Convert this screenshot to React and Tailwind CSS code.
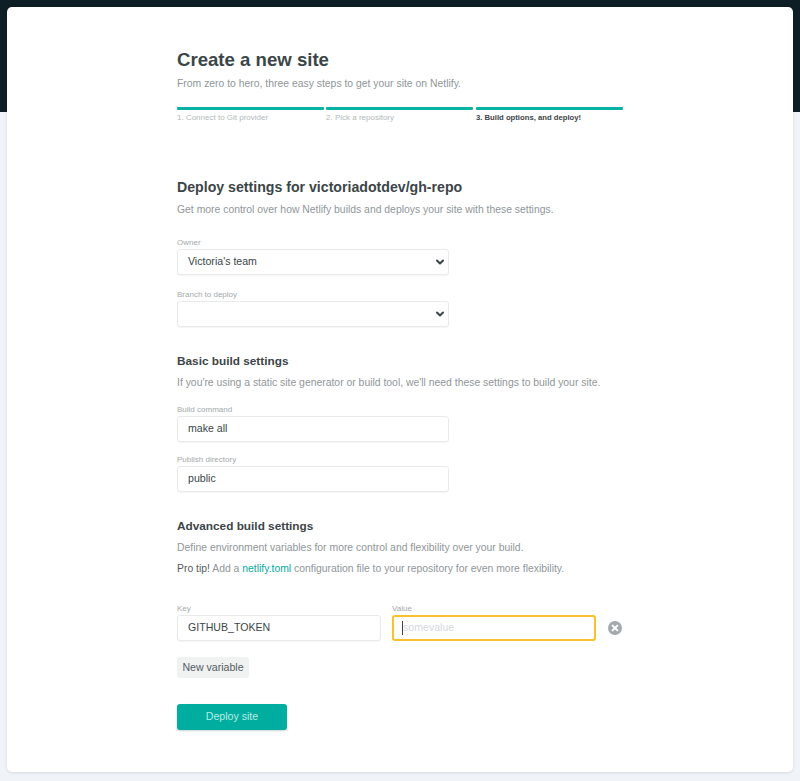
import React from "react";
import { ChevronDown } from "lucide-react";

const boxClass =
  "h-[26px] rounded-[3px] border border-[#e9ebeb] bg-white px-[10px] flex items-center text-[10.6px] text-[#3b4548] shadow-[0_1px_1px_rgba(0,0,0,0.04)]";
const labelClass = "h-[13px] text-[8px] leading-[13px] text-[#a3a9ac]";
const helpClass = "text-[10.4px] leading-[14px] text-[#90969a]";

function Step({ label, active }) {
  return (
    <div className="w-[147px]">
      <div className="h-[3px] rounded-[1px] bg-[#06b3a3]" />
      <div
        className={
          active
            ? "mt-[2px] text-[7.7px] leading-[12px] font-bold text-[#3b4548]"
            : "mt-[2px] text-[8px] leading-[12px] text-[#b4b9bb]"
        }
      >
        {label}
      </div>
    </div>
  );
}

function SelectBox({ value }) {
  return (
    <div className={`${boxClass} w-[272px] justify-between pr-[2px]`}>
      <span>{value}</span>
      <ChevronDown size={12} strokeWidth={4} className="text-[#3b4548]" />
    </div>
  );
}

function Field({ label, value }) {
  return (
    <div>
      <div className={labelClass}>{label}</div>
      <div className={`${boxClass} w-[272px]`}>{value}</div>
    </div>
  );
}

export default function App() {
  return (
    <div
      className="h-[781px] overflow-hidden px-[7px] pt-[7px] bg-[linear-gradient(#0e1e25_112px,#f0f4f8_112px)]"
      style={{ fontFamily: '"Liberation Sans", Arial, sans-serif' }}
    >
      <div className="h-[765px] rounded-[5px] bg-white pl-[170px] pt-[42px] shadow-[0_1px_3px_rgba(14,30,37,0.12)]">
        <h1 className="text-[18.6px] leading-[22px] font-bold text-[#3b4548]">
          Create a new site
        </h1>
        <p className={`${helpClass} mt-[6px]`}>
          From zero to hero, three easy steps to get your site on Netlify.
        </p>

        <div className="mt-[16px] flex gap-[2px]">
          <Step label="1. Connect to Git provider" />
          <Step label="2. Pick a repository" />
          <div className="ml-[1px]">
            <Step label="3. Build options, and deploy!" active />
          </div>
        </div>

        <h2 className="mt-[54px] text-[14.15px] leading-[18px] font-bold text-[#3b4548]">
          Deploy settings for victoriadotdev/gh-repo
        </h2>
        <p className={`${helpClass} mt-[7px]`}>
          Get more control over how Netlify builds and deploys your site with these settings.
        </p>

        <div className={`${labelClass} mt-[19px]`}>Owner</div>
        <SelectBox value="Victoria's team" />
        <div className={`${labelClass} mt-[13px]`}>Branch to deploy</div>
        <SelectBox value="" />

        <h3 className="mt-[26px] text-[11.8px] leading-[16px] font-bold text-[#3b4548]">
          Basic build settings
        </h3>
        <p className={`${helpClass} mt-[7px]`}>
          If you're using a static site generator or build tool, we'll need these settings to build your site.
        </p>

        <div className="mt-[13px]">
          <Field label="Build command" value="make all" />
        </div>
        <div className="mt-[11px]">
          <Field label="Publish directory" value="public" />
        </div>

        <h3 className="mt-[26px] text-[11.8px] leading-[16px] font-bold text-[#3b4548]">
          Advanced build settings
        </h3>
        <p className={`${helpClass} mt-[7px]`}>
          Define environment variables for more control and flexibility over your build.
        </p>
        <p className={`${helpClass} mt-[7px]`}>
          <span className="text-[#545b5e]">Pro tip!</span> Add a{" "}
          <span className="text-[#00ad9f]">netlify.toml</span> configuration file to your repository for even more flexibility.
        </p>

        <div className="mt-[26px] flex items-end gap-[11px]">
          <div>
            <div className={labelClass}>Key</div>
            <div className={`${boxClass} w-[204px]`}>GITHUB_TOKEN</div>
          </div>
          <div>
            <div className={labelClass}>Value</div>
            <div className="h-[26px] w-[204px] rounded-[3px] border-2 border-[#fbc02d] bg-white pl-[8px] flex items-center text-[10.6px] text-[#d5d9db]">
              <span className="h-[14px] w-px bg-[#3b4548]" />
              somevalue
            </div>
          </div>
          <svg width="14" height="14" viewBox="0 0 14 14" className="mb-[6px] ml-[1px]">
            <circle cx="7" cy="7" r="7" fill="#a3a9ac" />
            <path d="M4.6 4.6l4.8 4.8M9.4 4.6l-4.8 4.8" stroke="#fff" strokeWidth="2" strokeLinecap="round" />
          </svg>
        </div>

        <button className="mt-[16px] block h-[21px] w-[72px] rounded-[3px] bg-[#f0f2f2] text-[10.6px] text-[#545b5e]">
          New variable
        </button>
        <button className="mt-[26px] block h-[26px] w-[110px] rounded-[3px] bg-[#00ad9f] text-[10.6px] text-[#b8ebe4] shadow-[0_1px_2px_rgba(14,30,37,0.2)]">
          Deploy site
        </button>
      </div>
    </div>
  );
}
